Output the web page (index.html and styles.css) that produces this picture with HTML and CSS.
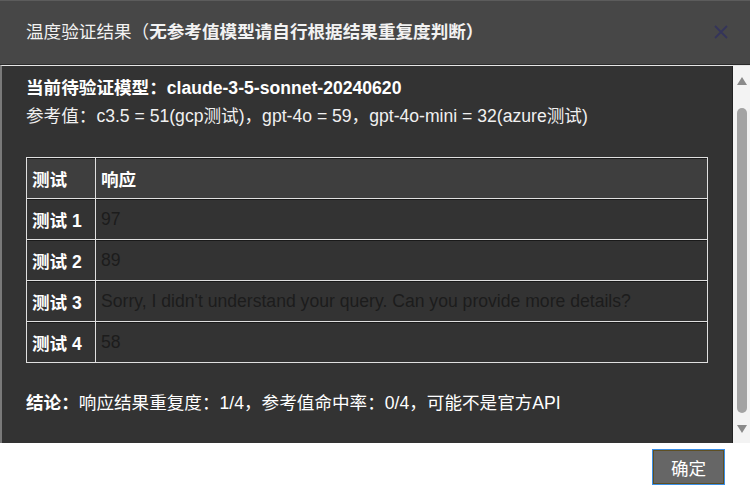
FILE: index.html
```html
<!DOCTYPE html>
<html lang="zh-CN">
<head>
  <meta charset="UTF-8" />
  <title>温度验证结果</title>
  <link rel="stylesheet" href="styles.css">
</head>
<body>
  <div class="dialog">
    <div class="dialog-header">
      <h2 class="dialog-title">温度验证结果（<b>无参考值模型请自行根据结果重复度判断）</b></h2>
      <span class="close-btn">
        <svg width="16" height="16" viewBox="0 0 16 16">
          <path d="M2 2 L14 14 M14 2 L2 14" stroke="#34345a" stroke-width="1.8" fill="none" />
        </svg>
      </span>
    </div>

    <div class="dialog-body">
      <div class="body-content">
        <p class="model"><b>当前待验证模型：claude-3-5-sonnet-20240620</b></p>
        <p class="ref">参考值：c3.5 = 51(gcp测试)，gpt-4o = 59，gpt-4o-mini = 32(azure测试)</p>

        <table class="result-table">
          <tr class="head-row">
            <th class="col-test">测试</th>
            <th>响应</th>
          </tr>
          <tr>
            <th class="col-test">测试 1</th>
            <td>97</td>
          </tr>
          <tr>
            <th class="col-test">测试 2</th>
            <td>89</td>
          </tr>
          <tr>
            <th class="col-test">测试 3</th>
            <td>Sorry, I didn't understand your query. Can you provide more details?</td>
          </tr>
          <tr>
            <th class="col-test">测试 4</th>
            <td>58</td>
          </tr>
        </table>

        <p class="conclusion"><b>结论：</b>响应结果重复度：1/4，参考值命中率：0/4，可能不是官方API</p>
      </div>

      <div class="scrollbar">
        <span class="arrow arrow-up"></span>
        <span class="thumb"></span>
        <span class="arrow arrow-down"></span>
      </div>
    </div>

    <div class="dialog-footer">
      <button class="ok-btn">确定</button>
    </div>
  </div>
</body>
</html>
```

FILE: styles.css
```css
* {
  box-sizing: border-box;
}

body {
  margin: 0;
  padding: 0;
  font-family: "Liberation Sans", "Noto Sans CJK SC", sans-serif;
  font-size: 17.6px;
  background: #ffffff;
  color: #ffffff;
}

.dialog {
  width: 750px;
  height: 501px;
  display: flex;
  flex-direction: column;
}

.dialog-header {
  height: 65px;
  background: #474747;
  border-top: 1px solid #5c5c5c;
  border-bottom: 1px solid #2a2a2a;
  display: flex;
  align-items: center;
  justify-content: space-between;
  padding: 0 21px 0 26px;
}

.dialog-title {
  margin: 0;
  font-size: 17.6px;
  font-weight: normal;
  line-height: 24px;
  color: #f2f2f2;
  padding-bottom: 2px;
}

.close-btn {
  display: flex;
  padding-bottom: 2px;
}

.dialog-body {
  height: 378px;
  display: flex;
  border-top: 1px solid #e6e6e6;
  border-left: 2px solid #7a7a7a;
}

.body-content {
  flex: 1;
  background: #333333;
  padding: 8px 0 0 24px;
  border-right: 1px solid #222;
}

.body-content p {
  margin: 0;
  line-height: 28px;
}

.ref {
  color: #f0f0f0;
}

.result-table {
  margin-top: 27px;
  width: 682px;
  border-collapse: collapse;
  border: 1px solid #e8e8e8;
}

.result-table th,
.result-table td {
  height: 41px;
  padding: 0 5px;
  border: 1px solid #e0e0e0;
  text-align: left;
  box-shadow: inset 0 1px 0 #1a1a1a;
}

.result-table th {
  font-weight: bold;
  color: #ffffff;
  background: #333333;
  white-space: nowrap;
}

.result-table .col-test {
  width: 69px;
}

.result-table td {
  color: #1c1c1c;
  background: #333333;
  white-space: nowrap;
}

.head-row th {
  background: #3e3e3e;
}

.conclusion {
  margin-top: 26px !important;
}

.scrollbar {
  width: 17px;
  background: #f3f3f3;
  display: flex;
  flex-direction: column;
  align-items: center;
  padding: 11px 0 10px;
}

.arrow {
  width: 0;
  height: 0;
  border-left: 5.5px solid transparent;
  border-right: 5.5px solid transparent;
}

.arrow-up {
  border-bottom: 8px solid #8a8a8a;
  margin-bottom: 23px;
}

.arrow-down {
  border-top: 8px solid #8a8a8a;
}

.thumb {
  flex: 1;
  width: 10px;
  background: #a3a3a3;
  border-radius: 5px;
  margin-bottom: 12px;
}

.dialog-footer {
  flex: 1;
  display: flex;
  justify-content: flex-end;
  align-items: flex-start;
  padding: 7px 26px 0 0;
}

.ok-btn {
  width: 71px;
  height: 34px;
  background: #666666;
  color: #ffffff;
  border: 1px solid #5e4f23;
  outline: 1px solid #3a8ee6;
  font-family: inherit;
  font-size: 17.6px;
  padding: 0;
}
```
